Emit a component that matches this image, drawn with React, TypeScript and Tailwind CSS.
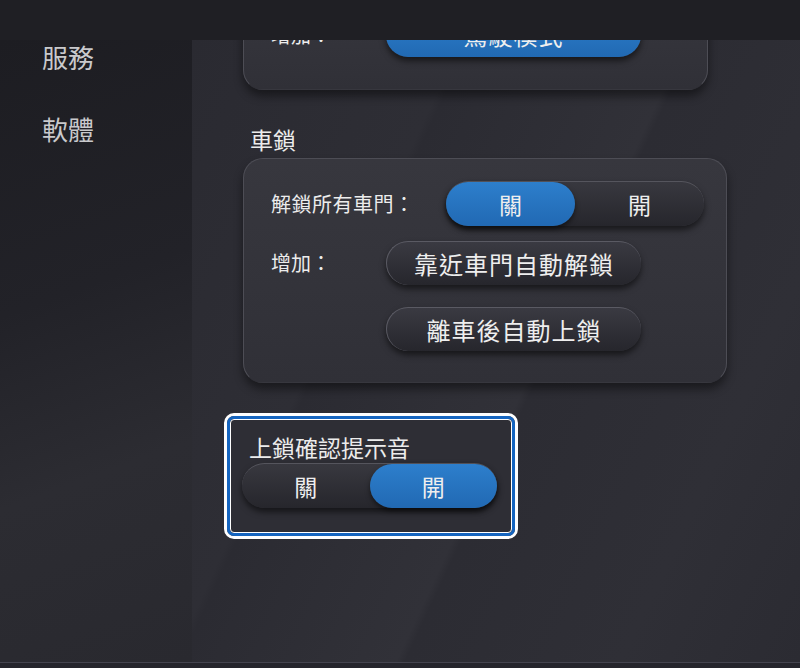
import React from "react";

// 分段開關（關 / 開）
const Toggle: React.FC<{ on: boolean; width: string }> = ({ on, width }) => (
  <div
    className={`${width} h-[45px] flex rounded-full bg-[linear-gradient(180deg,#38383f,#26262c)] border-t border-[#55555d] shadow-[0_4px_6px_rgba(0,0,0,0.55)] text-[23px] text-[#eeeeee]`}>
    <div
      className={`flex-1 flex items-center justify-center rounded-full ${
        on ? "" : "bg-[linear-gradient(180deg,#2d7fcc,#2169b3)] shadow-[0_3px_5px_rgba(0,0,0,0.5)]"
      }`}>
      關
    </div>
    <div
      className={`flex-1 flex items-center justify-center rounded-full ${
        on ? "bg-[linear-gradient(180deg,#2d7fcc,#2169b3)] shadow-[0_3px_5px_rgba(0,0,0,0.5)]" : ""
      }`}>
      開
    </div>
  </div>
);

// 一般按鈕
const PillButton: React.FC<{ children: React.ReactNode; blue?: boolean }> = ({
  children,
  blue = false,
}) => (
  <div
    className={`w-[255px] h-[44px] flex items-center justify-center rounded-full text-[24px] tracking-[1px] text-[#eeeeee] shadow-[0_4px_6px_rgba(0,0,0,0.55)] ${
      blue
        ? "bg-[linear-gradient(180deg,#2d7fcc,#2169b3)]"
        : "bg-[linear-gradient(180deg,#3a3a42,#26262c)] border-t border-l border-[#5a5a63]"
    }`}>
    {children}
  </div>
);

const Card: React.FC<{ children: React.ReactNode; className?: string }> = ({
  children,
  className = "",
}) => (
  <div
    className={`ml-[51px] rounded-[20px] border border-[#4d4d55] border-b-transparent bg-[linear-gradient(180deg,#37373e,#303037)] shadow-[0_6px_10px_rgba(0,0,0,0.45)] ${className}`}>
    {children}
  </div>
);

export default function App() {
  return (
    <div className="w-[800px] h-[668px] flex flex-col overflow-hidden bg-[#2c2c33] font-['Noto_Sans_CJK_TC','Noto_Sans',sans-serif]">
      {/* 上方列 */}
      <div className="h-[40px] shrink-0 bg-[#1f1f24]" />

      <div className="flex-1 flex min-h-0">
        {/* 側邊欄 */}
        <div className="w-[192px] shrink-0 overflow-hidden bg-[linear-gradient(160deg,#1d1d22_0%,#222228_40%,#2c2c32_68%,#29292f_100%)]">
          <div className="-mt-[20px] flex flex-col pl-[42px] text-[26px] text-[#c9c9cc]">
            <div className="h-[72px] flex items-center">服務</div>
            <div className="h-[72px] flex items-center">軟體</div>
          </div>
        </div>

        {/* 主要內容 */}
        <div className="flex-1 overflow-hidden bg-[linear-gradient(115deg,#2a2a31_0%,#2e2e35_30%,#2b2b32_31%,#313138_55%,#2c2c33_56%,#2f2f36_80%,#2b2b32_100%)]">
          <div className="-mt-[51px] flex flex-col text-[#ececec]">
            {/* 上一張卡片（已捲動） */}
            <Card className="w-[465px] pt-[23px] pb-[32px]">
              <div className="flex items-center pl-[27px]">
                <span className="w-[115px] text-[20px]">增加：</span>
                <PillButton blue>駕駛模式</PillButton>
              </div>
            </Card>

            {/* 車鎖 */}
            <div className="ml-[58px] mt-[34px] mb-[4px] h-[30px] flex items-center text-[23px]">車鎖</div>
            <Card className="w-[484px] pt-[22px] pb-[31px] pl-[27px] flex flex-col">
              <div className="flex items-center">
                <span className="w-[175px] text-[20px] tracking-[0.5px]">解鎖所有車門：</span>
                <Toggle on={false} width="w-[258px]" />
              </div>
              <div className="mt-[15px] flex items-center">
                <span className="w-[115px] text-[20px]">增加：</span>
                <PillButton>靠近車門自動解鎖</PillButton>
              </div>
              <div className="mt-[22px] flex items-center">
                <span className="w-[115px]" />
                <PillButton>離車後自動上鎖</PillButton>
              </div>
            </Card>

            {/* 上鎖確認提示音（醒目框） */}
            <div className="ml-[32px] mt-[30px] w-[294px] rounded-[10px] border-[3px] border-white">
              <div className="rounded-[7px] border-[3px] border-[#1565c0]">
                <div className="rounded-[4px] border-[1.5px] border-white bg-[#2e2e35] pl-[11px] pt-[11px] pb-[24px]">
                  <div className="ml-[7px] h-[32px] flex items-center text-[23px]">上鎖確認提示音</div>
                  <Toggle on={true} width="w-[255px]" />
                </div>
              </div>
            </div>
          </div>
        </div>
      </div>

      {/* 下方列 */}
      <div className="h-[6px] shrink-0 border-t border-[#44444f] bg-[#25252c]" />
    </div>
  );
}
